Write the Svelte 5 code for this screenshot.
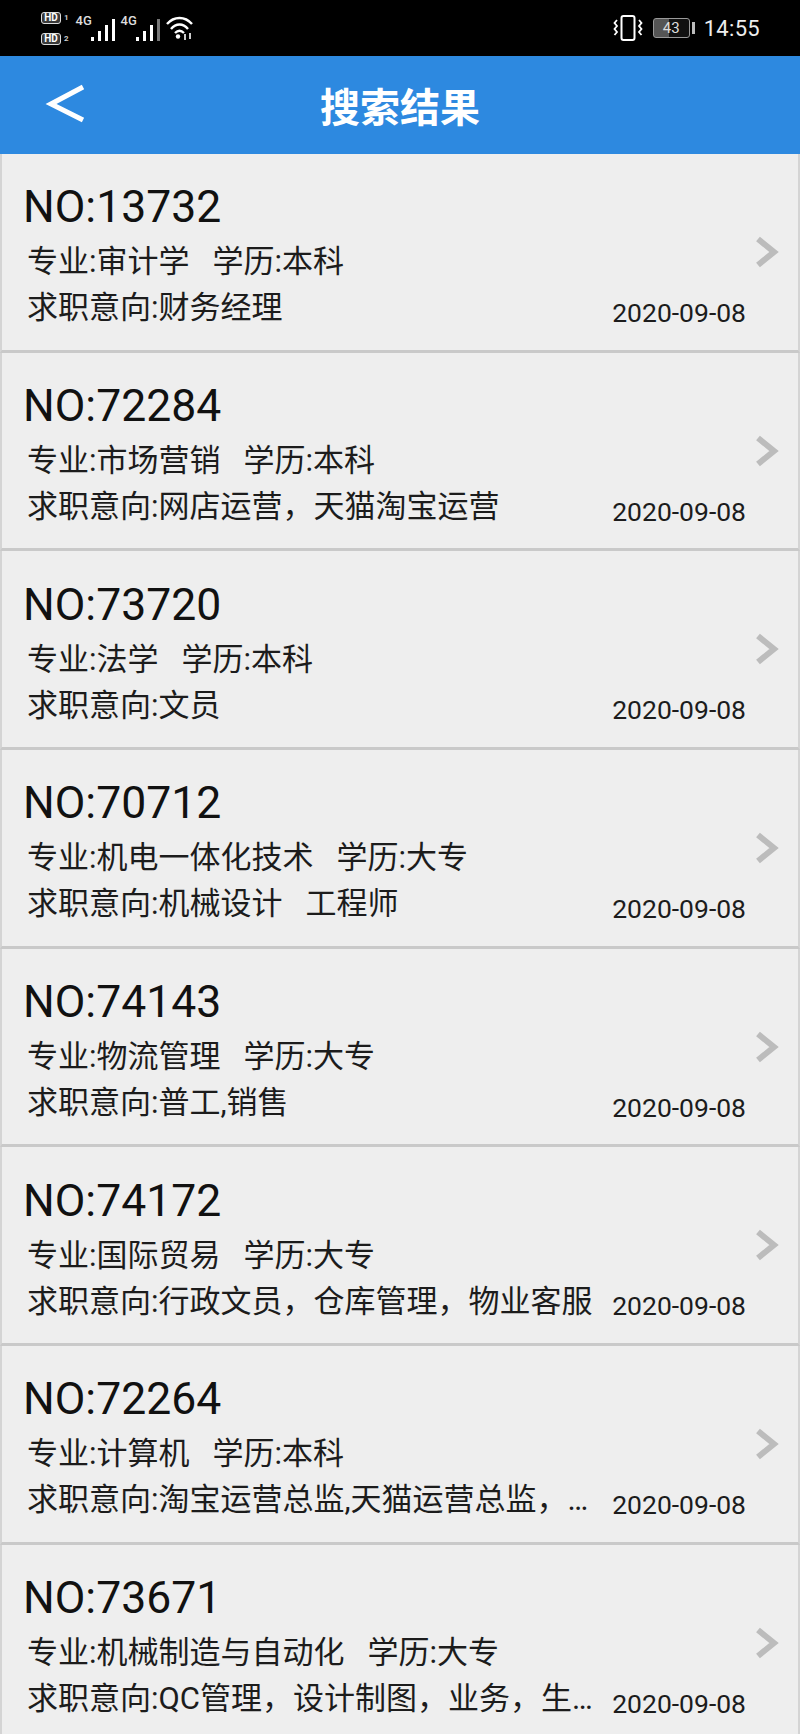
<script>
	const items = [
		{ no: '13732', major: '审计学', edu: '本科', job: '财务经理' },
		{ no: '72284', major: '市场营销', edu: '本科', job: '网店运营，天猫淘宝运营' },
		{ no: '73720', major: '法学', edu: '本科', job: '文员' },
		{ no: '70712', major: '机电一体化技术', edu: '大专', job: '机械设计   工程师' },
		{ no: '74143', major: '物流管理', edu: '大专', job: '普工,销售' },
		{ no: '74172', major: '国际贸易', edu: '大专', job: '行政文员，仓库管理，物业客服' },
		{ no: '72264', major: '计算机', edu: '本科', job: '淘宝运营总监,天猫运营总监，…' },
		{ no: '73671', major: '机械制造与自动化', edu: '大专', job: 'QC管理，设计制图，业务，生…' }
	];
</script>

<div class="page">
	<div class="status">
		<div class="status-left">
			<div class="hd">
				<div class="hd-row"><span class="hd-box">HD</span><span class="sim">1</span></div>
				<div class="hd-row"><span class="hd-box">HD</span><span class="sim">2</span></div>
			</div>
			<div class="signal">
				<span class="net">4G</span>
				<svg width="24" height="24" viewBox="0 0 24 24">
					<rect x="0" y="19" width="3" height="4" fill="#fff" />
					<rect x="7" y="13" width="3" height="10" fill="#fff" />
					<rect x="14" y="7" width="3" height="16" fill="#fff" />
					<rect x="21" y="1" width="3" height="22" fill="#fff" />
				</svg>
			</div>
			<div class="signal">
				<span class="net">4G</span>
				<svg width="24" height="24" viewBox="0 0 24 24">
					<rect x="0" y="19" width="3" height="4" fill="#fff" />
					<rect x="7" y="13" width="3" height="10" fill="#fff" />
					<rect x="14" y="7" width="3" height="16" fill="#fff" />
					<rect x="21" y="1" width="3" height="22" fill="#777" />
				</svg>
			</div>
			<svg class="wifi" width="30" height="26" viewBox="0 0 30 26" fill="none" stroke="#fff" stroke-width="2.400">
				<path d="M2 9 C9 1 20 1 27 9" />
				<path d="M6 14 C11 8 18 8 23 14" />
				<path d="M10 18 C13 15 16 15 19 18" />
				<circle cx="13" cy="21.500" r="2.200" fill="#fff" stroke="none" />
				<path d="M20 19 L20 25 M25 18 L25 24" stroke-width="1.600" />
			</svg>
		</div>
		<div class="status-right">
			<svg width="30" height="30" viewBox="0 0 30 30" fill="none" stroke="#fff" stroke-width="2">
				<rect x="8.500" y="3" width="13" height="24" rx="2" />
				<path d="M4 7 L1.500 10 L4 13 L1.500 16 L4 19 L1.500 22" stroke-width="1.800" />
				<path d="M26 7 L28.500 10 L26 13 L28.500 16 L26 19 L28.500 22" stroke-width="1.800" />
			</svg>
			<div class="battery">
				<div class="battery-body"><span>43</span></div>
				<div class="battery-tip"></div>
			</div>
			<span class="time">14:55</span>
		</div>
	</div>

	<header class="bar">
		<svg class="back" width="40" height="40" viewBox="0 0 40 40" fill="none" stroke="#fff" stroke-width="5">
			<path d="M38 4 L6 21 L38 37" />
		</svg>
		<h1>搜索结果</h1>
	</header>

	<div class="list">
		{#each items as item}
			<div class="row">
				<div class="main">
					<div class="no">NO:{item.no}</div>
					<div class="line">专业:{item.major}<span class="edu">学历:{item.edu}</span></div>
					<div class="line bottom">
						<span class="job">求职意向:{item.job}</span>
						<span class="date">2020-09-08</span>
					</div>
				</div>
				<svg class="chev" width="24" height="32" viewBox="0 0 24 32" fill="none" stroke="#bcbcbc" stroke-width="6">
					<path d="M3 3 L19 16 L3 29" />
				</svg>
			</div>
		{/each}
	</div>
</div>

<style>
	:global(body) {
		margin: 0;
		background: #eeeeee;
	}

	.page {
		height: 1734px;
		overflow: hidden;
		font-family: Roboto, "Noto Sans CJK SC", sans-serif;
		color: #1c1c1c;
	}

	.status {
		height: 56px;
		background: #000;
		color: #fff;
		display: flex;
		justify-content: space-between;
		align-items: center;
		box-sizing: border-box;
		padding: 0 40px 0 41px;
	}

	.status-left,
	.status-right {
		display: flex;
		align-items: center;
	}

	.hd {
		display: flex;
		flex-direction: column;
		gap: 9px;
		margin-right: 7px;
	}

	.hd-row {
		display: flex;
		align-items: center;
		gap: 3px;
	}

	.hd-box {
		background: #3a3a3a;
		border: 1px solid #ddd;
		color: #fff;
		font-size: 10px;
		font-weight: 700;
		line-height: 10px;
		height: 10px;
		width: 18px;
		text-align: center;
		border-radius: 3px;
	}

	.sim {
		font-size: 8px;
		font-weight: 700;
		line-height: 8px;
		color: #ccc;
	}

	.signal {
		display: flex;
		align-items: flex-start;
		width: 45px;
	}

	.net {
		font-size: 13px;
		font-weight: 500;
		line-height: 12px;
		color: #ddd;
	}

	.signal svg {
		margin-left: -1px;
		margin-top: 3px;
	}

	.wifi {
		margin-left: -1px;
	}

	.battery {
		display: flex;
		align-items: center;
		margin-left: 10px;
		gap: 2px;
	}

	.battery-body {
		width: 35px;
		height: 18px;
		border: 1px solid #999;
		border-radius: 3px;
		background: linear-gradient(90deg, #555 0 44%, #111 44%);
		display: flex;
		align-items: center;
		justify-content: center;
		font-size: 15px;
		color: #ddd;
	}

	.battery-tip {
		width: 3px;
		height: 12px;
		background: #bbb;
	}

	.time {
		font-size: 22px;
		color: #eee;
		margin-left: 9px;
		letter-spacing: 0.3px;
	}

	.bar {
		height: 98px;
		background: #2d89e0;
		display: flex;
		align-items: center;
		justify-content: center;
		position: relative;
	}

	.bar h1 {
		margin: 0;
		font-size: 40px;
		font-weight: 700;
		color: #fff;
	}

	.back {
		position: absolute;
		left: 45px;
		top: 27px;
	}

	.row {
		height: 198.700px;
		box-sizing: border-box;
		display: flex;
		align-items: center;
		background: #eeeeee;
		border-left: 2px solid #d4d4d4;
		border-right: 2px solid #d4d4d4;
		border-bottom: 3px solid #c9c9c9;
		padding: 0 19px 0 25px;
	}

	.main {
		flex: 1;
		min-width: 0;
		margin-right: 9px;
		padding-top: 5px;
	}

	.no {
		font-size: 44.500px;
		line-height: 66px;
		margin-left: -4px;
		color: #111;
	}

	.line {
		font-size: 31px;
		line-height: 44px;
		white-space: nowrap;
	}

	.edu {
		margin-left: 23px;
	}

	.bottom {
		display: flex;
		align-items: center;
		justify-content: space-between;
		height: 50px;
		line-height: 42px;
	}

	.job {
		white-space: pre;
		margin-bottom: 2px;
	}

	.date {
		font-size: 26.500px;
		margin-top: 7px;
	}
</style>
